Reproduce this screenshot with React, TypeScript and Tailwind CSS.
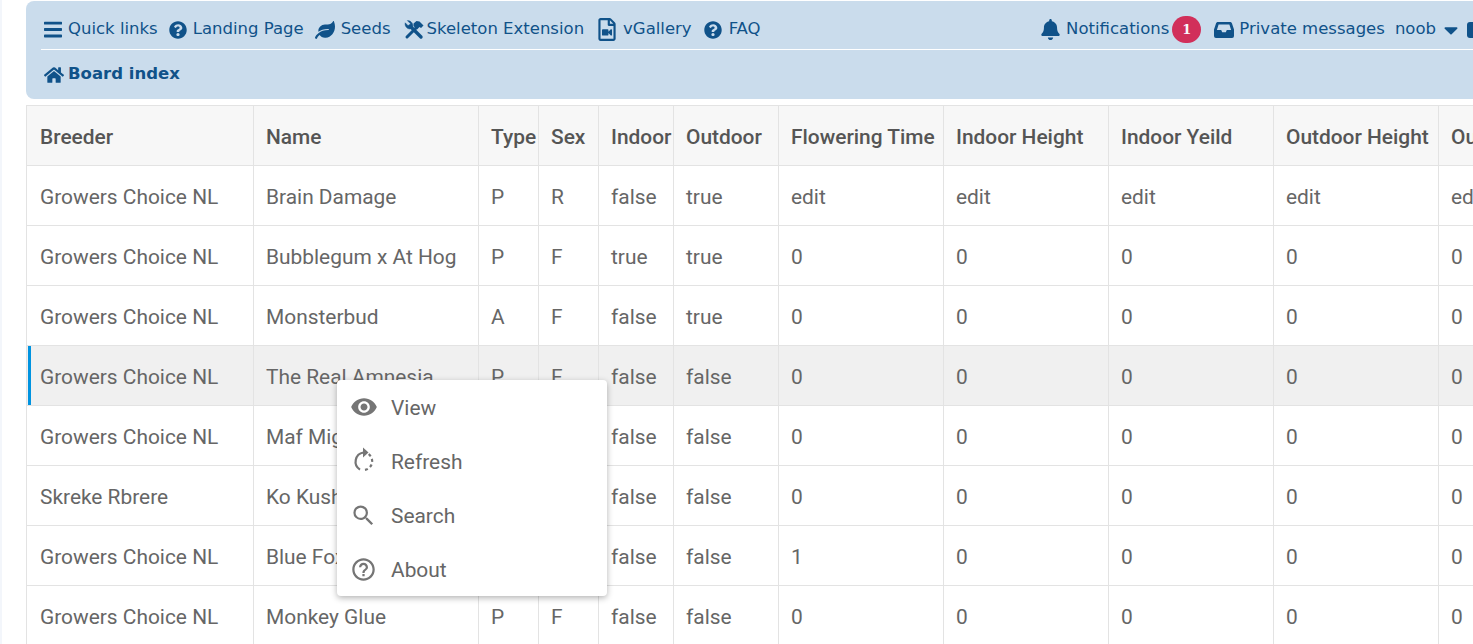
import { FaBars, FaBell, FaCaretDown, FaHome, FaLeaf, FaQuestionCircle, FaRegFileVideo } from 'react-icons/fa'
import { MdHelpOutline, MdSearch, MdVisibility } from 'react-icons/md'

const columns = [
  { label: 'Breeder', width: 'w-[227px]' },
  { label: 'Name', width: 'w-[225px]' },
  { label: 'Type', width: 'w-[60px]' },
  { label: 'Sex', width: 'w-[60px]' },
  { label: 'Indoor', width: 'w-[75px]' },
  { label: 'Outdoor', width: 'w-[105px]' },
  { label: 'Flowering Time', width: 'w-[165px]' },
  { label: 'Indoor Height', width: 'w-[165px]' },
  { label: 'Indoor Yeild', width: 'w-[165px]' },
  { label: 'Outdoor Height', width: 'w-[165px]' },
  { label: 'Outdoor Yeild', width: 'w-[165px]' },
]

const rows = [
  ['Growers Choice NL', 'Brain Damage', 'P', 'R', 'false', 'true', 'edit', 'edit', 'edit', 'edit', 'edit'],
  ['Growers Choice NL', 'Bubblegum x At Hog', 'P', 'F', 'true', 'true', '0', '0', '0', '0', '0'],
  ['Growers Choice NL', 'Monsterbud', 'A', 'F', 'false', 'true', '0', '0', '0', '0', '0'],
  ['Growers Choice NL', 'The Real Amnesia', 'P', 'F', 'false', 'false', '0', '0', '0', '0', '0'],
  ['Growers Choice NL', 'Maf Mighty', 'P', 'F', 'false', 'false', '0', '0', '0', '0', '0'],
  ['Skreke Rbrere', 'Ko Kush', 'P', 'F', 'false', 'false', '0', '0', '0', '0', '0'],
  ['Growers Choice NL', 'Blue Fox', 'P', 'F', 'false', 'false', '1', '0', '0', '0', '0'],
  ['Growers Choice NL', 'Monkey Glue', 'P', 'F', 'false', 'false', '0', '0', '0', '0', '0'],
]

function RefreshIcon() {
  return (
    <svg viewBox="0 0 26 26" className="h-[26px] w-[26px] overflow-visible" fill="none" stroke="#757575" strokeWidth="2.2">
      <path d="M12.5 4.5A9.3 9.3 0 0 0 9 21.6" />
      <path d="M12 -0.5v10L17.5 4.5z" fill="#757575" stroke="none" />
      <path d="M17.6 6.2A8.8 8.8 0 0 1 13.5 22" strokeDasharray="3 2.7" />
    </svg>
  )
}

function ToolsIcon() {
  return (
    <svg viewBox="0 0 20 20" className="mr-[3px] h-5 w-5" fill="none" stroke="currentColor">
      <path d="M6 6l11 11" strokeWidth="3.4" strokeLinecap="round" />
      <path d="M1.2 2.8l3 3 1.8-.4.4-1.8-3-3A5 5 0 0 1 8.4 7.5L6 9A5 5 0 0 1 1.2 2.8z" fill="currentColor" strokeWidth="0.5" />
      <path d="M3 17l9-9" strokeWidth="3" strokeLinecap="round" />
      <path d="M9.5 3.5l3-2.5 3 .5 4 4-2.5 2.5-1.5-1-2.5 2.5-3.5-3.5z" fill="currentColor" stroke="none" />
    </svg>
  )
}

function InboxIcon() {
  return (
    <svg viewBox="0 0 20 16" className="mr-[5px] h-4 w-5" fill="currentColor">
      <path fillRule="evenodd" d="M4 0h12c1 0 1.7.6 2 1.4l2 6.1V14a2 2 0 0 1-2 2H2a2 2 0 0 1-2-2V7.500l2-6.100C2.300.6 3 0 4 0zm.6 2.500L2.900 8h4.300l1 2.200h3.600l1-2.200h4.300l-1.700-5.500z" />
    </svg>
  )
}

export default function App() {
  return (
    <div className="relative h-[644px] w-[1473px] overflow-hidden bg-white font-['Roboto',sans-serif]">
      <div className="h-full w-[1500px] border-l-2 border-[#f3f6fb] pl-6 pt-px">
        <div className="h-[98px] w-full rounded-l-lg bg-[#cadcec] pl-[15px] font-['DejaVu_Sans',sans-serif] text-[16.5px] text-[#105289]">
          <div className="flex h-[49px] items-center border-b border-white pl-[3px] pt-[9px]">
            <span className="flex items-center">
              <FaBars className="mr-[6px] h-[21px] w-[18px]" />
              Quick links
            </span>
            <span className="ml-[11px] flex items-center">
              <FaQuestionCircle className="mr-[6px] h-[18px] w-[18px]" />
              Landing Page
            </span>
            <span className="ml-[11px] flex items-center">
              <FaLeaf className="mr-[6px] h-[20px] w-5" />
              Seeds
            </span>
            <span className="ml-[13px] flex items-center">
              <ToolsIcon />
              Skeleton Extension
            </span>
            <span className="ml-[14px] flex items-center">
              <FaRegFileVideo className="mr-[7px] h-[23px] w-[18px]" />
              vGallery
            </span>
            <span className="ml-[12px] flex items-center">
              <FaQuestionCircle className="mr-[7px] h-[18px] w-[18px]" />
              FAQ
            </span>
            <span className="ml-auto flex items-center">
              <FaBell className="mr-[6px] h-[21px] w-[19px]" />
              Notifications
              <span className="ml-[3px] flex h-[27px] w-[29px] items-center justify-center rounded-full bg-[#d31141] font-['DejaVu_Serif',serif] text-[13px] font-bold text-white opacity-85">
                1
              </span>
            </span>
            <span className="ml-[13px] flex items-center">
              <InboxIcon />
              Private messages
            </span>
            <span className="ml-[10px] flex items-center">
              noob
              <FaCaretDown className="ml-2 h-[24px] w-[14px]" />
            </span>
            <span className="ml-[9px] mr-[15px] h-4 w-[18px] rounded-[3px] bg-[#105289]" />
          </div>
          <div className="flex h-[49px] items-center pl-[3px] font-bold">
            <FaHome className="mr-1 h-[18px] w-[20px]" />
            Board index
          </div>
        </div>

        <table className="mt-[6px] w-[1577px] table-fixed border-collapse text-[20.9px] text-[#666666]">
          <thead>
            <tr className="h-[60px] bg-[#f7f7f7]">
              {columns.map((col, j) => (
                <th key={col.label} className={`${col.width} ${j === 0 ? 'pl-[13px]' : 'pl-3'} overflow-hidden whitespace-nowrap border border-[#e3e3e3] pt-1 text-left font-medium text-[#555555]`}>
                  {col.label}
                </th>
              ))}
            </tr>
          </thead>
          <tbody>
            {rows.map((row, i) => (
              <tr key={i} className={i === 3 ? 'h-[60px] bg-[#f0f0f0]' : 'h-[60px]'}>
                {row.map((cell, j) => (
                  <td key={j} className={`${j === 0 ? 'pl-[13px]' : 'pl-3'} relative overflow-hidden whitespace-nowrap border border-[#e3e3e3] pt-1 text-left font-normal`}>
                    {i === 3 && j === 0 && <span className="absolute bottom-0 left-px top-0 w-[3px] bg-[#0093e0]" />}
                    {cell}
                  </td>
                ))}
              </tr>
            ))}
          </tbody>
        </table>
      </div>

      <div className="absolute left-[337px] top-[380px] w-[270px] rounded bg-white text-[20.9px] text-[#666666] shadow-[0_2px_6px_rgba(0,0,0,0.3)]">
        <div className="flex h-[54px] items-center pl-[13px]">
          <MdVisibility className="h-[28px] w-[28px] text-[#757575]" />
          <span className="ml-[13px] pt-1">View</span>
        </div>
        <div className="flex h-[54px] items-center pl-[14px]">
          <RefreshIcon />
          <span className="ml-[14px] pt-1">Refresh</span>
        </div>
        <div className="flex h-[54px] items-center pl-[13px]">
          <MdSearch className="h-[27px] w-[27px] text-[#757575]" />
          <span className="ml-[14px] pt-1">Search</span>
        </div>
        <div className="flex h-[54px] items-center pl-[13px]">
          <MdHelpOutline className="h-[27px] w-[27px] text-[#757575]" />
          <span className="ml-[14px] pt-1">About</span>
        </div>
      </div>
    </div>
  )
}
